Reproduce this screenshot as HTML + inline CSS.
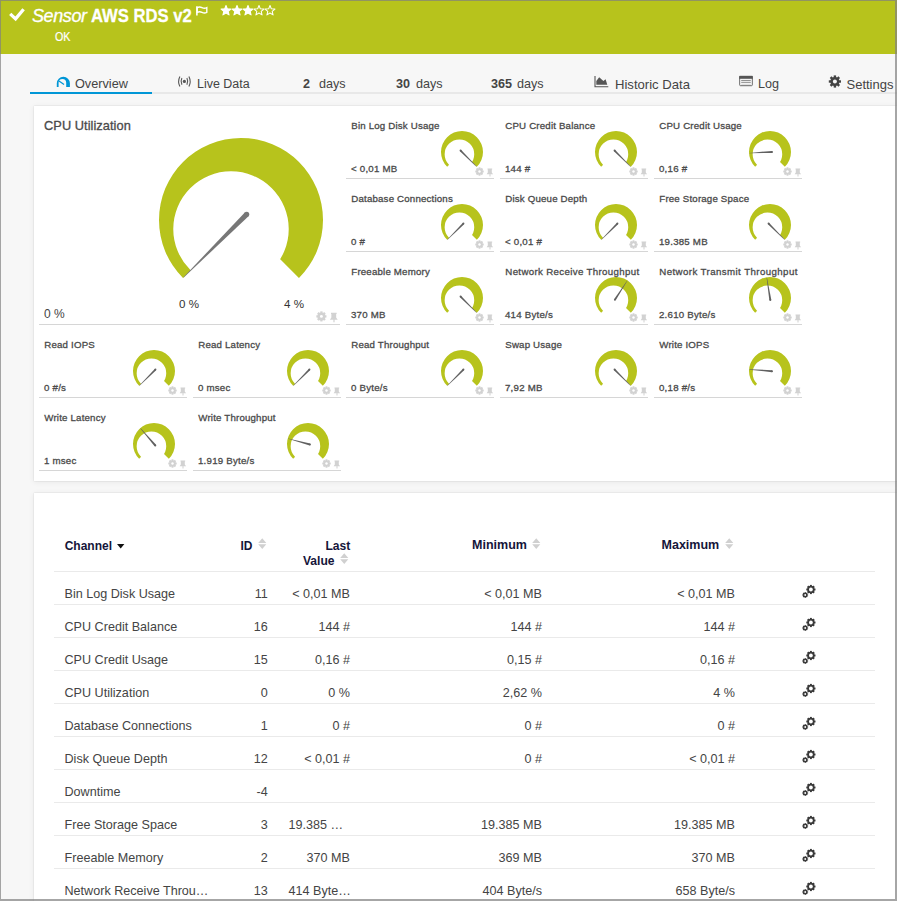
<!DOCTYPE html>
<html><head><meta charset="utf-8"><style>
html,body{margin:0;padding:0;}
body{width:897px;height:901px;overflow:hidden;position:relative;background:#f7f7f7;font-family:"Liberation Sans", sans-serif;}
.t{position:absolute;white-space:nowrap;}
.g{position:absolute;overflow:visible;}
.hdr{position:absolute;left:0;top:0;width:897px;height:54px;background:#b7c31c;}
.tabline{position:absolute;left:30px;top:92px;width:867px;height:2px;background:#e8e8e8;}
.tabul{position:absolute;left:30px;top:92px;width:122px;height:2px;background:#0096d6;}
.panel{position:absolute;left:34px;width:900px;background:#fff;box-shadow:0 0 1.5px rgba(0,0,0,0.14), 0 1px 6px rgba(0,0,0,0.07);}
.ul{position:absolute;height:1px;background:#d6d6d6;}
.tl{position:absolute;left:54px;width:821px;height:1px;background:#eaeaea;}
.frame{position:absolute;left:0;top:0;width:897px;height:901px;box-sizing:border-box;border-left:1px solid rgba(128,128,128,0.7);border-top:1px solid rgba(128,128,128,0.7);border-right:2px solid rgba(128,128,128,0.7);border-bottom:2px solid rgba(128,128,128,0.7);}
</style></head><body>
<div class="hdr"></div>
<svg class="g" style="left:0px;top:0px" width="30" height="30" viewBox="0 0 30 30"><path d="M10.2,13.9 L15.6,18.9 L23.6,9.3" stroke="#fff" stroke-width="3.3" fill="none"/></svg>
<div class="t" style="left:32px;top:6.76px;font-size:18px;line-height:18px;color:#fff;font-weight:normal;font-style:italic;letter-spacing:-0.4px;-webkit-text-stroke:0.3px #fff;">Sensor</div>
<div class="t" style="left:91px;top:6.79px;font-size:18.8px;line-height:18.8px;color:#fff;font-weight:bold;font-style:normal;transform:scaleX(0.885);transform-origin:0 0;-webkit-text-stroke:0.3px #fff;">AWS RDS v2</div>
<svg class="g" style="left:190px;top:0px" width="20" height="20" viewBox="0 0 20 20"><path d="M6.9,6.2 V15.6" stroke="#fff" stroke-width="1.6" fill="none"/><path d="M7.2,7.6 q2.4,-1.2 4.8,0 t4.8,0 v4.8 q-2.4,1.2 -4.8,0 t-4.8,0 z" stroke="#fff" stroke-width="1.4" fill="none"/></svg>
<svg class="g" style="left:0;top:0" width="300" height="30"><polygon points="226.00,5.50 227.35,8.84 230.95,9.09 228.19,11.41 229.06,14.91 226.00,13.00 222.94,14.91 223.81,11.41 221.05,9.09 224.65,8.84" fill="#fff" stroke="#fff" stroke-width="1.05" stroke-linejoin="round"/><polygon points="237.00,5.50 238.35,8.84 241.95,9.09 239.19,11.41 240.06,14.91 237.00,13.00 233.94,14.91 234.81,11.41 232.05,9.09 235.65,8.84" fill="#fff" stroke="#fff" stroke-width="1.05" stroke-linejoin="round"/><polygon points="248.00,5.50 249.35,8.84 252.95,9.09 250.19,11.41 251.06,14.91 248.00,13.00 244.94,14.91 245.81,11.41 243.05,9.09 246.65,8.84" fill="#fff" stroke="#fff" stroke-width="1.05" stroke-linejoin="round"/><polygon points="259.00,5.50 260.35,8.84 263.95,9.09 261.19,11.41 262.06,14.91 259.00,13.00 255.94,14.91 256.81,11.41 254.05,9.09 257.65,8.84" fill="none" stroke="#fff" stroke-width="1.05" stroke-linejoin="round"/><polygon points="270.00,5.50 271.35,8.84 274.95,9.09 272.19,11.41 273.06,14.91 270.00,13.00 266.94,14.91 267.81,11.41 265.05,9.09 268.65,8.84" fill="none" stroke="#fff" stroke-width="1.05" stroke-linejoin="round"/></svg>
<div class="t" style="left:55px;top:30.67px;font-size:12.2px;line-height:12.2px;color:#fff;font-weight:normal;font-style:normal;-webkit-text-stroke:0.2px #fff;transform:scaleX(0.88);transform-origin:0 0;">OK</div>
<div class="tabline"></div><div class="tabul"></div>
<svg class="g" style="left:50px;top:70px" width="25" height="20" viewBox="0 0 25 20"><path fill="#0096d6" fill-rule="evenodd" d="M6.8,16.9 V13.35 A6.55,6.55 0 0 1 19.9,13.35 V16.9 Z M8.6,16.9 V12.8 A3.8,3.8 0 0 1 16.2,12.8 V16.9 Z"/><path d="M9,11 L14,14.6" stroke="#0096d6" stroke-width="1.2"/></svg>
<div class="t" style="left:75px;top:77.85px;font-size:12.7px;line-height:12.7px;color:#444;font-weight:normal;font-style:normal;">Overview</div>
<svg class="g" style="left:174px;top:72px" width="22" height="20" viewBox="0 0 22 20"><circle cx="10.4" cy="9.4" r="1.6" fill="#555"/><path d="M7.9,6.1 A7.2,7.2 0 0 0 7.9,12.7 M12.9,6.1 A7.2,7.2 0 0 1 12.9,12.7 M5.9,4.4 A11.2,11.2 0 0 0 5.9,14.5 M14.9,4.4 A11.2,11.2 0 0 1 14.9,14.5" stroke="#555" stroke-width="1.1" fill="none"/></svg>
<div class="t" style="left:197px;top:78.06px;font-size:12.45px;line-height:12.45px;color:#444;font-weight:normal;font-style:normal;">Live Data</div>
<div class="t" style="left:303px;top:77.93px;font-size:12.6px;line-height:12.6px;color:#444;font-weight:bold;font-style:normal;">2</div>
<div class="t" style="left:319px;top:77.93px;font-size:12.6px;line-height:12.6px;color:#444;font-weight:normal;font-style:normal;">days</div>
<div class="t" style="left:396px;top:77.93px;font-size:12.6px;line-height:12.6px;color:#444;font-weight:bold;font-style:normal;">30</div>
<div class="t" style="left:416px;top:77.93px;font-size:12.6px;line-height:12.6px;color:#444;font-weight:normal;font-style:normal;">days</div>
<div class="t" style="left:491px;top:77.93px;font-size:12.6px;line-height:12.6px;color:#444;font-weight:bold;font-style:normal;">365</div>
<div class="t" style="left:517px;top:77.93px;font-size:12.6px;line-height:12.6px;color:#444;font-weight:normal;font-style:normal;">days</div>
<svg class="g" style="left:590px;top:72px" width="25" height="20" viewBox="0 0 25 20"><path d="M5,3.9 V14.8 H18.3" stroke="#555" stroke-width="1.1" fill="none"/><path d="M6.3,12.8 V8.9 L9.2,5.3 L13.4,8.9 L15.6,7.2 L17.3,12.8 Z" fill="#555"/></svg>
<div class="t" style="left:615px;top:77.51px;font-size:13.1px;line-height:13.1px;color:#444;font-weight:normal;font-style:normal;">Historic Data</div>
<svg class="g" style="left:735px;top:72px" width="25" height="20" viewBox="0 0 25 20"><rect x="4.7" y="4.4" width="12.6" height="9.3" rx="0.8" fill="#fff" stroke="#666" stroke-width="1"/><rect x="4.2" y="3.9" width="13.6" height="2.9" fill="#555"/><path d="M6.2,8.4 h9.6 M6.2,10.3 h9.6" stroke="#777" stroke-width="0.9"/><path d="M6.2,12.2 h9.6" stroke="#ccc" stroke-width="0.9"/></svg>
<div class="t" style="left:758px;top:77.93px;font-size:12.6px;line-height:12.6px;color:#444;font-weight:normal;font-style:normal;">Log</div>
<svg class="g" style="left:825px;top:72px" width="20" height="20" viewBox="0 0 20 20"><g fill="#444"><circle cx="9.9" cy="9.5" r="4.6"/><rect x="8.7" y="3.4" width="2.4" height="12.2" transform="rotate(0 9.9 9.5)"/><rect x="8.7" y="3.4" width="2.4" height="12.2" transform="rotate(45 9.9 9.5)"/><rect x="8.7" y="3.4" width="2.4" height="12.2" transform="rotate(90 9.9 9.5)"/><rect x="8.7" y="3.4" width="2.4" height="12.2" transform="rotate(135 9.9 9.5)"/></g><circle cx="9.9" cy="9.5" r="2" fill="#f7f7f7"/></svg>
<div class="t" style="left:846.5px;top:77.60px;font-size:13px;line-height:13px;color:#444;font-weight:normal;font-style:normal;">Settings</div>
<div class="panel" style="top:106px;height:375px"></div>
<div class="t" style="left:44px;top:120.26px;font-size:12.8px;line-height:12.8px;color:#4a4a4a;font-weight:normal;font-style:normal;-webkit-text-stroke:0.3px #4a4a4a;letter-spacing:0.05px;">CPU Utilization</div>
<svg class="g" style="left:149px;top:128px" width="184" height="184" viewBox="0 0 184 184"><clipPath id="c1"><path d="M92,92 L16.62,167.38 A106.60000000000001,106.60000000000001 0 1 1 167.38,167.38 Z"/></clipPath><path d="M10,92 a82,82 0 1 0 164,0 a82,82 0 1 0 -164,0 Z M24.27,101.02 a57.73,57.73 0 1 0 115.46,0 a57.73,57.73 0 1 0 -115.46,0 Z" fill="#b7c31c" fill-rule="evenodd" clip-path="url(#c1)"/><path d="M95.82,84.50 L34.42,149.23 L34.77,149.58 L99.50,88.18 Z" fill="#777"/><circle cx="97.66" cy="86.34" r="2.6" fill="#777"/></svg>
<div class="t" style="left:179px;top:298.38px;font-size:11.6px;line-height:11.6px;color:#333;font-weight:normal;font-style:normal;">0 %</div>
<div class="t" style="left:284px;top:298.38px;font-size:11.6px;line-height:11.6px;color:#333;font-weight:normal;font-style:normal;">4 %</div>
<div class="t" style="left:44px;top:307.84px;font-size:12px;line-height:12px;color:#444;font-weight:normal;font-style:normal;">0 %</div>
<div class="ul" style="left:39px;top:324px;width:301px"></div>
<svg class="g" style="left:315.80px;top:310.70px" width="24.00" height="14.40" viewBox="0 0 20 12"><g fill="#d2d2d2"><g transform="translate(0,0)"><circle cx="4.5" cy="4.5" r="3.3"/><rect x="3.55" y="0.3" width="1.9" height="8.4" transform="rotate(0 4.5 4.5)"/><rect x="3.55" y="0.3" width="1.9" height="8.4" transform="rotate(45 4.5 4.5)"/><rect x="3.55" y="0.3" width="1.9" height="8.4" transform="rotate(90 4.5 4.5)"/><rect x="3.55" y="0.3" width="1.9" height="8.4" transform="rotate(135 4.5 4.5)"/></g></g><circle cx="4.5" cy="4.5" r="1.2" fill="#fff"/><path d="M12.5,1.4 H17.2 V2.4 H16.8 V5.4 L18.1,7.2 H11.6 L12.8,5.4 V2.4 H12.5 Z M14.5,7 h1 v2.4 h-1 z" fill="#d2d2d2"/></svg>
<svg class="g" style="left:431px;top:121px" width="62" height="62" viewBox="0 0 62 62"><clipPath id="c2"><path d="M31,31 L11.70,50.30 A27.3,27.3 0 1 1 50.30,50.30 Z"/></clipPath><path d="M10,31 a21,21 0 1 0 42,0 a21,21 0 1 0 -42,0 Z M13.65,33.31 a14.78,14.78 0 1 0 29.57,0 a14.78,14.78 0 1 0 -29.57,0 Z" fill="#b7c31c" fill-rule="evenodd" clip-path="url(#c2)"/><path d="M28.88,30.29 L45.41,45.69 L45.69,45.41 L30.29,28.88 Z" fill="#606060"/><circle cx="29.59" cy="29.59" r="1.0" fill="#606060"/></svg>
<div class="t" style="left:351.3px;top:120.99px;font-size:9.7px;line-height:9.7px;color:#4a4a4a;font-weight:normal;font-style:normal;-webkit-text-stroke:0.3px #4a4a4a;letter-spacing:0.18px;">Bin Log Disk Usage</div>
<div class="t" style="left:351.0px;top:163.59px;font-size:9.7px;line-height:9.7px;color:#4a4a4a;font-weight:normal;font-style:normal;-webkit-text-stroke:0.3px #4a4a4a;letter-spacing:0.22px;">&lt; 0,01 MB</div>
<div class="ul" style="left:346px;top:178px;width:148px"></div>
<svg class="g" style="left:474.50px;top:166.50px" width="20.00" height="12.00" viewBox="0 0 20 12"><g fill="#d2d2d2"><g transform="translate(0,0)"><circle cx="4.5" cy="4.5" r="3.3"/><rect x="3.55" y="0.3" width="1.9" height="8.4" transform="rotate(0 4.5 4.5)"/><rect x="3.55" y="0.3" width="1.9" height="8.4" transform="rotate(45 4.5 4.5)"/><rect x="3.55" y="0.3" width="1.9" height="8.4" transform="rotate(90 4.5 4.5)"/><rect x="3.55" y="0.3" width="1.9" height="8.4" transform="rotate(135 4.5 4.5)"/></g></g><circle cx="4.5" cy="4.5" r="1.2" fill="#fff"/><path d="M12.5,1.4 H17.2 V2.4 H16.8 V5.4 L18.1,7.2 H11.6 L12.8,5.4 V2.4 H12.5 Z M14.5,7 h1 v2.4 h-1 z" fill="#d2d2d2"/></svg>
<svg class="g" style="left:585px;top:121px" width="62" height="62" viewBox="0 0 62 62"><clipPath id="c3"><path d="M31,31 L11.70,50.30 A27.3,27.3 0 1 1 50.30,50.30 Z"/></clipPath><path d="M10,31 a21,21 0 1 0 42,0 a21,21 0 1 0 -42,0 Z M13.65,33.31 a14.78,14.78 0 1 0 29.57,0 a14.78,14.78 0 1 0 -29.57,0 Z" fill="#b7c31c" fill-rule="evenodd" clip-path="url(#c3)"/><path d="M28.88,30.29 L45.41,45.69 L45.69,45.41 L30.29,28.88 Z" fill="#606060"/><circle cx="29.59" cy="29.59" r="1.0" fill="#606060"/></svg>
<div class="t" style="left:505.3px;top:120.99px;font-size:9.7px;line-height:9.7px;color:#4a4a4a;font-weight:normal;font-style:normal;-webkit-text-stroke:0.3px #4a4a4a;letter-spacing:0.18px;">CPU Credit Balance</div>
<div class="t" style="left:505.0px;top:163.59px;font-size:9.7px;line-height:9.7px;color:#4a4a4a;font-weight:normal;font-style:normal;-webkit-text-stroke:0.3px #4a4a4a;letter-spacing:0.22px;">144 #</div>
<div class="ul" style="left:500px;top:178px;width:148px"></div>
<svg class="g" style="left:628.50px;top:166.50px" width="20.00" height="12.00" viewBox="0 0 20 12"><g fill="#d2d2d2"><g transform="translate(0,0)"><circle cx="4.5" cy="4.5" r="3.3"/><rect x="3.55" y="0.3" width="1.9" height="8.4" transform="rotate(0 4.5 4.5)"/><rect x="3.55" y="0.3" width="1.9" height="8.4" transform="rotate(45 4.5 4.5)"/><rect x="3.55" y="0.3" width="1.9" height="8.4" transform="rotate(90 4.5 4.5)"/><rect x="3.55" y="0.3" width="1.9" height="8.4" transform="rotate(135 4.5 4.5)"/></g></g><circle cx="4.5" cy="4.5" r="1.2" fill="#fff"/><path d="M12.5,1.4 H17.2 V2.4 H16.8 V5.4 L18.1,7.2 H11.6 L12.8,5.4 V2.4 H12.5 Z M14.5,7 h1 v2.4 h-1 z" fill="#d2d2d2"/></svg>
<svg class="g" style="left:739px;top:121px" width="62" height="62" viewBox="0 0 62 62"><clipPath id="c4"><path d="M31,31 L11.70,50.30 A27.3,27.3 0 1 1 50.30,50.30 Z"/></clipPath><path d="M10,31 a21,21 0 1 0 42,0 a21,21 0 1 0 -42,0 Z M13.65,33.31 a14.78,14.78 0 1 0 29.57,0 a14.78,14.78 0 1 0 -29.57,0 Z" fill="#b7c31c" fill-rule="evenodd" clip-path="url(#c4)"/><path d="M32.94,29.90 L10.44,31.88 L10.46,32.28 L33.05,31.89 Z" fill="#606060"/><circle cx="33.00" cy="30.90" r="1.0" fill="#606060"/></svg>
<div class="t" style="left:659.3px;top:120.99px;font-size:9.7px;line-height:9.7px;color:#4a4a4a;font-weight:normal;font-style:normal;-webkit-text-stroke:0.3px #4a4a4a;letter-spacing:0.18px;">CPU Credit Usage</div>
<div class="t" style="left:659.0px;top:163.59px;font-size:9.7px;line-height:9.7px;color:#4a4a4a;font-weight:normal;font-style:normal;-webkit-text-stroke:0.3px #4a4a4a;letter-spacing:0.22px;">0,16 #</div>
<div class="ul" style="left:654px;top:178px;width:148px"></div>
<svg class="g" style="left:782.50px;top:166.50px" width="20.00" height="12.00" viewBox="0 0 20 12"><g fill="#d2d2d2"><g transform="translate(0,0)"><circle cx="4.5" cy="4.5" r="3.3"/><rect x="3.55" y="0.3" width="1.9" height="8.4" transform="rotate(0 4.5 4.5)"/><rect x="3.55" y="0.3" width="1.9" height="8.4" transform="rotate(45 4.5 4.5)"/><rect x="3.55" y="0.3" width="1.9" height="8.4" transform="rotate(90 4.5 4.5)"/><rect x="3.55" y="0.3" width="1.9" height="8.4" transform="rotate(135 4.5 4.5)"/></g></g><circle cx="4.5" cy="4.5" r="1.2" fill="#fff"/><path d="M12.5,1.4 H17.2 V2.4 H16.8 V5.4 L18.1,7.2 H11.6 L12.8,5.4 V2.4 H12.5 Z M14.5,7 h1 v2.4 h-1 z" fill="#d2d2d2"/></svg>
<svg class="g" style="left:431px;top:194px" width="62" height="62" viewBox="0 0 62 62"><clipPath id="c5"><path d="M31,31 L11.70,50.30 A27.3,27.3 0 1 1 50.30,50.30 Z"/></clipPath><path d="M10,31 a21,21 0 1 0 42,0 a21,21 0 1 0 -42,0 Z M13.65,33.31 a14.78,14.78 0 1 0 29.57,0 a14.78,14.78 0 1 0 -29.57,0 Z" fill="#b7c31c" fill-rule="evenodd" clip-path="url(#c5)"/><path d="M31.71,28.88 L16.31,45.41 L16.59,45.69 L33.12,30.29 Z" fill="#606060"/><circle cx="32.41" cy="29.59" r="1.0" fill="#606060"/></svg>
<div class="t" style="left:351.3px;top:193.99px;font-size:9.7px;line-height:9.7px;color:#4a4a4a;font-weight:normal;font-style:normal;-webkit-text-stroke:0.3px #4a4a4a;letter-spacing:0.18px;">Database Connections</div>
<div class="t" style="left:351.0px;top:236.59px;font-size:9.7px;line-height:9.7px;color:#4a4a4a;font-weight:normal;font-style:normal;-webkit-text-stroke:0.3px #4a4a4a;letter-spacing:0.22px;">0 #</div>
<div class="ul" style="left:346px;top:251px;width:148px"></div>
<svg class="g" style="left:474.50px;top:239.50px" width="20.00" height="12.00" viewBox="0 0 20 12"><g fill="#d2d2d2"><g transform="translate(0,0)"><circle cx="4.5" cy="4.5" r="3.3"/><rect x="3.55" y="0.3" width="1.9" height="8.4" transform="rotate(0 4.5 4.5)"/><rect x="3.55" y="0.3" width="1.9" height="8.4" transform="rotate(45 4.5 4.5)"/><rect x="3.55" y="0.3" width="1.9" height="8.4" transform="rotate(90 4.5 4.5)"/><rect x="3.55" y="0.3" width="1.9" height="8.4" transform="rotate(135 4.5 4.5)"/></g></g><circle cx="4.5" cy="4.5" r="1.2" fill="#fff"/><path d="M12.5,1.4 H17.2 V2.4 H16.8 V5.4 L18.1,7.2 H11.6 L12.8,5.4 V2.4 H12.5 Z M14.5,7 h1 v2.4 h-1 z" fill="#d2d2d2"/></svg>
<svg class="g" style="left:585px;top:194px" width="62" height="62" viewBox="0 0 62 62"><clipPath id="c6"><path d="M31,31 L11.70,50.30 A27.3,27.3 0 1 1 50.30,50.30 Z"/></clipPath><path d="M10,31 a21,21 0 1 0 42,0 a21,21 0 1 0 -42,0 Z M13.65,33.31 a14.78,14.78 0 1 0 29.57,0 a14.78,14.78 0 1 0 -29.57,0 Z" fill="#b7c31c" fill-rule="evenodd" clip-path="url(#c6)"/><path d="M31.71,28.88 L16.31,45.41 L16.59,45.69 L33.12,30.29 Z" fill="#606060"/><circle cx="32.41" cy="29.59" r="1.0" fill="#606060"/></svg>
<div class="t" style="left:505.3px;top:193.99px;font-size:9.7px;line-height:9.7px;color:#4a4a4a;font-weight:normal;font-style:normal;-webkit-text-stroke:0.3px #4a4a4a;letter-spacing:0.18px;">Disk Queue Depth</div>
<div class="t" style="left:505.0px;top:236.59px;font-size:9.7px;line-height:9.7px;color:#4a4a4a;font-weight:normal;font-style:normal;-webkit-text-stroke:0.3px #4a4a4a;letter-spacing:0.22px;">&lt; 0,01 #</div>
<div class="ul" style="left:500px;top:251px;width:148px"></div>
<svg class="g" style="left:628.50px;top:239.50px" width="20.00" height="12.00" viewBox="0 0 20 12"><g fill="#d2d2d2"><g transform="translate(0,0)"><circle cx="4.5" cy="4.5" r="3.3"/><rect x="3.55" y="0.3" width="1.9" height="8.4" transform="rotate(0 4.5 4.5)"/><rect x="3.55" y="0.3" width="1.9" height="8.4" transform="rotate(45 4.5 4.5)"/><rect x="3.55" y="0.3" width="1.9" height="8.4" transform="rotate(90 4.5 4.5)"/><rect x="3.55" y="0.3" width="1.9" height="8.4" transform="rotate(135 4.5 4.5)"/></g></g><circle cx="4.5" cy="4.5" r="1.2" fill="#fff"/><path d="M12.5,1.4 H17.2 V2.4 H16.8 V5.4 L18.1,7.2 H11.6 L12.8,5.4 V2.4 H12.5 Z M14.5,7 h1 v2.4 h-1 z" fill="#d2d2d2"/></svg>
<svg class="g" style="left:739px;top:194px" width="62" height="62" viewBox="0 0 62 62"><clipPath id="c7"><path d="M31,31 L11.70,50.30 A27.3,27.3 0 1 1 50.30,50.30 Z"/></clipPath><path d="M10,31 a21,21 0 1 0 42,0 a21,21 0 1 0 -42,0 Z M13.65,33.31 a14.78,14.78 0 1 0 29.57,0 a14.78,14.78 0 1 0 -29.57,0 Z" fill="#b7c31c" fill-rule="evenodd" clip-path="url(#c7)"/><path d="M28.88,30.29 L45.41,45.69 L45.69,45.41 L30.29,28.88 Z" fill="#606060"/><circle cx="29.59" cy="29.59" r="1.0" fill="#606060"/></svg>
<div class="t" style="left:659.3px;top:193.99px;font-size:9.7px;line-height:9.7px;color:#4a4a4a;font-weight:normal;font-style:normal;-webkit-text-stroke:0.3px #4a4a4a;letter-spacing:0.18px;">Free Storage Space</div>
<div class="t" style="left:659.0px;top:236.59px;font-size:9.7px;line-height:9.7px;color:#4a4a4a;font-weight:normal;font-style:normal;-webkit-text-stroke:0.3px #4a4a4a;letter-spacing:0.22px;">19.385 MB</div>
<div class="ul" style="left:654px;top:251px;width:148px"></div>
<svg class="g" style="left:782.50px;top:239.50px" width="20.00" height="12.00" viewBox="0 0 20 12"><g fill="#d2d2d2"><g transform="translate(0,0)"><circle cx="4.5" cy="4.5" r="3.3"/><rect x="3.55" y="0.3" width="1.9" height="8.4" transform="rotate(0 4.5 4.5)"/><rect x="3.55" y="0.3" width="1.9" height="8.4" transform="rotate(45 4.5 4.5)"/><rect x="3.55" y="0.3" width="1.9" height="8.4" transform="rotate(90 4.5 4.5)"/><rect x="3.55" y="0.3" width="1.9" height="8.4" transform="rotate(135 4.5 4.5)"/></g></g><circle cx="4.5" cy="4.5" r="1.2" fill="#fff"/><path d="M12.5,1.4 H17.2 V2.4 H16.8 V5.4 L18.1,7.2 H11.6 L12.8,5.4 V2.4 H12.5 Z M14.5,7 h1 v2.4 h-1 z" fill="#d2d2d2"/></svg>
<svg class="g" style="left:431px;top:267px" width="62" height="62" viewBox="0 0 62 62"><clipPath id="c8"><path d="M31,31 L11.70,50.30 A27.3,27.3 0 1 1 50.30,50.30 Z"/></clipPath><path d="M10,31 a21,21 0 1 0 42,0 a21,21 0 1 0 -42,0 Z M13.65,33.31 a14.78,14.78 0 1 0 29.57,0 a14.78,14.78 0 1 0 -29.57,0 Z" fill="#b7c31c" fill-rule="evenodd" clip-path="url(#c8)"/><path d="M28.88,30.29 L45.41,45.69 L45.69,45.41 L30.29,28.88 Z" fill="#606060"/><circle cx="29.59" cy="29.59" r="1.0" fill="#606060"/></svg>
<div class="t" style="left:351.3px;top:266.99px;font-size:9.7px;line-height:9.7px;color:#4a4a4a;font-weight:normal;font-style:normal;-webkit-text-stroke:0.3px #4a4a4a;letter-spacing:0.18px;">Freeable Memory</div>
<div class="t" style="left:351.0px;top:309.59px;font-size:9.7px;line-height:9.7px;color:#4a4a4a;font-weight:normal;font-style:normal;-webkit-text-stroke:0.3px #4a4a4a;letter-spacing:0.22px;">370 MB</div>
<div class="ul" style="left:346px;top:324px;width:148px"></div>
<svg class="g" style="left:474.50px;top:312.50px" width="20.00" height="12.00" viewBox="0 0 20 12"><g fill="#d2d2d2"><g transform="translate(0,0)"><circle cx="4.5" cy="4.5" r="3.3"/><rect x="3.55" y="0.3" width="1.9" height="8.4" transform="rotate(0 4.5 4.5)"/><rect x="3.55" y="0.3" width="1.9" height="8.4" transform="rotate(45 4.5 4.5)"/><rect x="3.55" y="0.3" width="1.9" height="8.4" transform="rotate(90 4.5 4.5)"/><rect x="3.55" y="0.3" width="1.9" height="8.4" transform="rotate(135 4.5 4.5)"/></g></g><circle cx="4.5" cy="4.5" r="1.2" fill="#fff"/><path d="M12.5,1.4 H17.2 V2.4 H16.8 V5.4 L18.1,7.2 H11.6 L12.8,5.4 V2.4 H12.5 Z M14.5,7 h1 v2.4 h-1 z" fill="#d2d2d2"/></svg>
<svg class="g" style="left:585px;top:267px" width="62" height="62" viewBox="0 0 62 62"><clipPath id="c9"><path d="M31,31 L11.70,50.30 A27.3,27.3 0 1 1 50.30,50.30 Z"/></clipPath><path d="M10,31 a21,21 0 1 0 42,0 a21,21 0 1 0 -42,0 Z M13.65,33.31 a14.78,14.78 0 1 0 29.57,0 a14.78,14.78 0 1 0 -29.57,0 Z" fill="#b7c31c" fill-rule="evenodd" clip-path="url(#c9)"/><path d="M30.75,33.22 L42.38,13.85 L42.04,13.63 L29.07,32.13 Z" fill="#606060"/><circle cx="29.91" cy="32.68" r="1.0" fill="#606060"/></svg>
<div class="t" style="left:505.3px;top:266.99px;font-size:9.7px;line-height:9.7px;color:#4a4a4a;font-weight:normal;font-style:normal;-webkit-text-stroke:0.3px #4a4a4a;letter-spacing:0.34px;">Network Receive Throughput</div>
<div class="t" style="left:505.0px;top:309.59px;font-size:9.7px;line-height:9.7px;color:#4a4a4a;font-weight:normal;font-style:normal;-webkit-text-stroke:0.3px #4a4a4a;letter-spacing:0.22px;">414 Byte/s</div>
<div class="ul" style="left:500px;top:324px;width:148px"></div>
<svg class="g" style="left:628.50px;top:312.50px" width="20.00" height="12.00" viewBox="0 0 20 12"><g fill="#d2d2d2"><g transform="translate(0,0)"><circle cx="4.5" cy="4.5" r="3.3"/><rect x="3.55" y="0.3" width="1.9" height="8.4" transform="rotate(0 4.5 4.5)"/><rect x="3.55" y="0.3" width="1.9" height="8.4" transform="rotate(45 4.5 4.5)"/><rect x="3.55" y="0.3" width="1.9" height="8.4" transform="rotate(90 4.5 4.5)"/><rect x="3.55" y="0.3" width="1.9" height="8.4" transform="rotate(135 4.5 4.5)"/></g></g><circle cx="4.5" cy="4.5" r="1.2" fill="#fff"/><path d="M12.5,1.4 H17.2 V2.4 H16.8 V5.4 L18.1,7.2 H11.6 L12.8,5.4 V2.4 H12.5 Z M14.5,7 h1 v2.4 h-1 z" fill="#d2d2d2"/></svg>
<svg class="g" style="left:739px;top:267px" width="62" height="62" viewBox="0 0 62 62"><clipPath id="c10"><path d="M31,31 L11.70,50.30 A27.3,27.3 0 1 1 50.30,50.30 Z"/></clipPath><path d="M10,31 a21,21 0 1 0 42,0 a21,21 0 1 0 -42,0 Z M13.65,33.31 a14.78,14.78 0 1 0 29.57,0 a14.78,14.78 0 1 0 -29.57,0 Z" fill="#b7c31c" fill-rule="evenodd" clip-path="url(#c10)"/><path d="M32.30,32.82 L27.98,10.64 L27.58,10.70 L30.33,33.13 Z" fill="#606060"/><circle cx="31.31" cy="32.98" r="1.0" fill="#606060"/></svg>
<div class="t" style="left:659.3px;top:266.99px;font-size:9.7px;line-height:9.7px;color:#4a4a4a;font-weight:normal;font-style:normal;-webkit-text-stroke:0.3px #4a4a4a;letter-spacing:0.41px;">Network Transmit Throughput</div>
<div class="t" style="left:659.0px;top:309.59px;font-size:9.7px;line-height:9.7px;color:#4a4a4a;font-weight:normal;font-style:normal;-webkit-text-stroke:0.3px #4a4a4a;letter-spacing:0.22px;">2.610 Byte/s</div>
<div class="ul" style="left:654px;top:324px;width:148px"></div>
<svg class="g" style="left:782.50px;top:312.50px" width="20.00" height="12.00" viewBox="0 0 20 12"><g fill="#d2d2d2"><g transform="translate(0,0)"><circle cx="4.5" cy="4.5" r="3.3"/><rect x="3.55" y="0.3" width="1.9" height="8.4" transform="rotate(0 4.5 4.5)"/><rect x="3.55" y="0.3" width="1.9" height="8.4" transform="rotate(45 4.5 4.5)"/><rect x="3.55" y="0.3" width="1.9" height="8.4" transform="rotate(90 4.5 4.5)"/><rect x="3.55" y="0.3" width="1.9" height="8.4" transform="rotate(135 4.5 4.5)"/></g></g><circle cx="4.5" cy="4.5" r="1.2" fill="#fff"/><path d="M12.5,1.4 H17.2 V2.4 H16.8 V5.4 L18.1,7.2 H11.6 L12.8,5.4 V2.4 H12.5 Z M14.5,7 h1 v2.4 h-1 z" fill="#d2d2d2"/></svg>
<svg class="g" style="left:123px;top:340px" width="62" height="62" viewBox="0 0 62 62"><clipPath id="c11"><path d="M31,31 L11.70,50.30 A27.3,27.3 0 1 1 50.30,50.30 Z"/></clipPath><path d="M10,31 a21,21 0 1 0 42,0 a21,21 0 1 0 -42,0 Z M13.65,33.31 a14.78,14.78 0 1 0 29.57,0 a14.78,14.78 0 1 0 -29.57,0 Z" fill="#b7c31c" fill-rule="evenodd" clip-path="url(#c11)"/><path d="M31.71,28.88 L16.31,45.41 L16.59,45.69 L33.12,30.29 Z" fill="#606060"/><circle cx="32.41" cy="29.59" r="1.0" fill="#606060"/></svg>
<div class="t" style="left:44.3px;top:339.99px;font-size:9.7px;line-height:9.7px;color:#4a4a4a;font-weight:normal;font-style:normal;-webkit-text-stroke:0.3px #4a4a4a;letter-spacing:0.18px;">Read IOPS</div>
<div class="t" style="left:44.0px;top:382.59px;font-size:9.7px;line-height:9.7px;color:#4a4a4a;font-weight:normal;font-style:normal;-webkit-text-stroke:0.3px #4a4a4a;letter-spacing:0.22px;">0 #/s</div>
<div class="ul" style="left:39px;top:397px;width:148px"></div>
<svg class="g" style="left:167.50px;top:385.50px" width="20.00" height="12.00" viewBox="0 0 20 12"><g fill="#d2d2d2"><g transform="translate(0,0)"><circle cx="4.5" cy="4.5" r="3.3"/><rect x="3.55" y="0.3" width="1.9" height="8.4" transform="rotate(0 4.5 4.5)"/><rect x="3.55" y="0.3" width="1.9" height="8.4" transform="rotate(45 4.5 4.5)"/><rect x="3.55" y="0.3" width="1.9" height="8.4" transform="rotate(90 4.5 4.5)"/><rect x="3.55" y="0.3" width="1.9" height="8.4" transform="rotate(135 4.5 4.5)"/></g></g><circle cx="4.5" cy="4.5" r="1.2" fill="#fff"/><path d="M12.5,1.4 H17.2 V2.4 H16.8 V5.4 L18.1,7.2 H11.6 L12.8,5.4 V2.4 H12.5 Z M14.5,7 h1 v2.4 h-1 z" fill="#d2d2d2"/></svg>
<svg class="g" style="left:277px;top:340px" width="62" height="62" viewBox="0 0 62 62"><clipPath id="c12"><path d="M31,31 L11.70,50.30 A27.3,27.3 0 1 1 50.30,50.30 Z"/></clipPath><path d="M10,31 a21,21 0 1 0 42,0 a21,21 0 1 0 -42,0 Z M13.65,33.31 a14.78,14.78 0 1 0 29.57,0 a14.78,14.78 0 1 0 -29.57,0 Z" fill="#b7c31c" fill-rule="evenodd" clip-path="url(#c12)"/><path d="M31.71,28.88 L16.31,45.41 L16.59,45.69 L33.12,30.29 Z" fill="#606060"/><circle cx="32.41" cy="29.59" r="1.0" fill="#606060"/></svg>
<div class="t" style="left:198.3px;top:339.99px;font-size:9.7px;line-height:9.7px;color:#4a4a4a;font-weight:normal;font-style:normal;-webkit-text-stroke:0.3px #4a4a4a;letter-spacing:0.18px;">Read Latency</div>
<div class="t" style="left:198.0px;top:382.59px;font-size:9.7px;line-height:9.7px;color:#4a4a4a;font-weight:normal;font-style:normal;-webkit-text-stroke:0.3px #4a4a4a;letter-spacing:0.22px;">0 msec</div>
<div class="ul" style="left:193px;top:397px;width:148px"></div>
<svg class="g" style="left:321.50px;top:385.50px" width="20.00" height="12.00" viewBox="0 0 20 12"><g fill="#d2d2d2"><g transform="translate(0,0)"><circle cx="4.5" cy="4.5" r="3.3"/><rect x="3.55" y="0.3" width="1.9" height="8.4" transform="rotate(0 4.5 4.5)"/><rect x="3.55" y="0.3" width="1.9" height="8.4" transform="rotate(45 4.5 4.5)"/><rect x="3.55" y="0.3" width="1.9" height="8.4" transform="rotate(90 4.5 4.5)"/><rect x="3.55" y="0.3" width="1.9" height="8.4" transform="rotate(135 4.5 4.5)"/></g></g><circle cx="4.5" cy="4.5" r="1.2" fill="#fff"/><path d="M12.5,1.4 H17.2 V2.4 H16.8 V5.4 L18.1,7.2 H11.6 L12.8,5.4 V2.4 H12.5 Z M14.5,7 h1 v2.4 h-1 z" fill="#d2d2d2"/></svg>
<svg class="g" style="left:431px;top:340px" width="62" height="62" viewBox="0 0 62 62"><clipPath id="c13"><path d="M31,31 L11.70,50.30 A27.3,27.3 0 1 1 50.30,50.30 Z"/></clipPath><path d="M10,31 a21,21 0 1 0 42,0 a21,21 0 1 0 -42,0 Z M13.65,33.31 a14.78,14.78 0 1 0 29.57,0 a14.78,14.78 0 1 0 -29.57,0 Z" fill="#b7c31c" fill-rule="evenodd" clip-path="url(#c13)"/><path d="M31.71,28.88 L16.31,45.41 L16.59,45.69 L33.12,30.29 Z" fill="#606060"/><circle cx="32.41" cy="29.59" r="1.0" fill="#606060"/></svg>
<div class="t" style="left:351.3px;top:339.99px;font-size:9.7px;line-height:9.7px;color:#4a4a4a;font-weight:normal;font-style:normal;-webkit-text-stroke:0.3px #4a4a4a;letter-spacing:0.18px;">Read Throughput</div>
<div class="t" style="left:351.0px;top:382.59px;font-size:9.7px;line-height:9.7px;color:#4a4a4a;font-weight:normal;font-style:normal;-webkit-text-stroke:0.3px #4a4a4a;letter-spacing:0.22px;">0 Byte/s</div>
<div class="ul" style="left:346px;top:397px;width:148px"></div>
<svg class="g" style="left:474.50px;top:385.50px" width="20.00" height="12.00" viewBox="0 0 20 12"><g fill="#d2d2d2"><g transform="translate(0,0)"><circle cx="4.5" cy="4.5" r="3.3"/><rect x="3.55" y="0.3" width="1.9" height="8.4" transform="rotate(0 4.5 4.5)"/><rect x="3.55" y="0.3" width="1.9" height="8.4" transform="rotate(45 4.5 4.5)"/><rect x="3.55" y="0.3" width="1.9" height="8.4" transform="rotate(90 4.5 4.5)"/><rect x="3.55" y="0.3" width="1.9" height="8.4" transform="rotate(135 4.5 4.5)"/></g></g><circle cx="4.5" cy="4.5" r="1.2" fill="#fff"/><path d="M12.5,1.4 H17.2 V2.4 H16.8 V5.4 L18.1,7.2 H11.6 L12.8,5.4 V2.4 H12.5 Z M14.5,7 h1 v2.4 h-1 z" fill="#d2d2d2"/></svg>
<svg class="g" style="left:585px;top:340px" width="62" height="62" viewBox="0 0 62 62"><clipPath id="c14"><path d="M31,31 L11.70,50.30 A27.3,27.3 0 1 1 50.30,50.30 Z"/></clipPath><path d="M10,31 a21,21 0 1 0 42,0 a21,21 0 1 0 -42,0 Z M13.65,33.31 a14.78,14.78 0 1 0 29.57,0 a14.78,14.78 0 1 0 -29.57,0 Z" fill="#b7c31c" fill-rule="evenodd" clip-path="url(#c14)"/><path d="M28.88,30.29 L45.41,45.69 L45.69,45.41 L30.29,28.88 Z" fill="#606060"/><circle cx="29.59" cy="29.59" r="1.0" fill="#606060"/></svg>
<div class="t" style="left:505.3px;top:339.99px;font-size:9.7px;line-height:9.7px;color:#4a4a4a;font-weight:normal;font-style:normal;-webkit-text-stroke:0.3px #4a4a4a;letter-spacing:0.18px;">Swap Usage</div>
<div class="t" style="left:505.0px;top:382.59px;font-size:9.7px;line-height:9.7px;color:#4a4a4a;font-weight:normal;font-style:normal;-webkit-text-stroke:0.3px #4a4a4a;letter-spacing:0.22px;">7,92 MB</div>
<div class="ul" style="left:500px;top:397px;width:148px"></div>
<svg class="g" style="left:628.50px;top:385.50px" width="20.00" height="12.00" viewBox="0 0 20 12"><g fill="#d2d2d2"><g transform="translate(0,0)"><circle cx="4.5" cy="4.5" r="3.3"/><rect x="3.55" y="0.3" width="1.9" height="8.4" transform="rotate(0 4.5 4.5)"/><rect x="3.55" y="0.3" width="1.9" height="8.4" transform="rotate(45 4.5 4.5)"/><rect x="3.55" y="0.3" width="1.9" height="8.4" transform="rotate(90 4.5 4.5)"/><rect x="3.55" y="0.3" width="1.9" height="8.4" transform="rotate(135 4.5 4.5)"/></g></g><circle cx="4.5" cy="4.5" r="1.2" fill="#fff"/><path d="M12.5,1.4 H17.2 V2.4 H16.8 V5.4 L18.1,7.2 H11.6 L12.8,5.4 V2.4 H12.5 Z M14.5,7 h1 v2.4 h-1 z" fill="#d2d2d2"/></svg>
<svg class="g" style="left:739px;top:340px" width="62" height="62" viewBox="0 0 62 62"><clipPath id="c15"><path d="M31,31 L11.70,50.30 A27.3,27.3 0 1 1 50.30,50.30 Z"/></clipPath><path d="M10,31 a21,21 0 1 0 42,0 a21,21 0 1 0 -42,0 Z M13.65,33.31 a14.78,14.78 0 1 0 29.57,0 a14.78,14.78 0 1 0 -29.57,0 Z" fill="#b7c31c" fill-rule="evenodd" clip-path="url(#c15)"/><path d="M33.06,30.14 L10.48,29.36 L10.46,29.76 L32.93,32.14 Z" fill="#606060"/><circle cx="33.00" cy="31.14" r="1.0" fill="#606060"/></svg>
<div class="t" style="left:659.3px;top:339.99px;font-size:9.7px;line-height:9.7px;color:#4a4a4a;font-weight:normal;font-style:normal;-webkit-text-stroke:0.3px #4a4a4a;letter-spacing:0.18px;">Write IOPS</div>
<div class="t" style="left:659.0px;top:382.59px;font-size:9.7px;line-height:9.7px;color:#4a4a4a;font-weight:normal;font-style:normal;-webkit-text-stroke:0.3px #4a4a4a;letter-spacing:0.22px;">0,18 #/s</div>
<div class="ul" style="left:654px;top:397px;width:148px"></div>
<svg class="g" style="left:782.50px;top:385.50px" width="20.00" height="12.00" viewBox="0 0 20 12"><g fill="#d2d2d2"><g transform="translate(0,0)"><circle cx="4.5" cy="4.5" r="3.3"/><rect x="3.55" y="0.3" width="1.9" height="8.4" transform="rotate(0 4.5 4.5)"/><rect x="3.55" y="0.3" width="1.9" height="8.4" transform="rotate(45 4.5 4.5)"/><rect x="3.55" y="0.3" width="1.9" height="8.4" transform="rotate(90 4.5 4.5)"/><rect x="3.55" y="0.3" width="1.9" height="8.4" transform="rotate(135 4.5 4.5)"/></g></g><circle cx="4.5" cy="4.5" r="1.2" fill="#fff"/><path d="M12.5,1.4 H17.2 V2.4 H16.8 V5.4 L18.1,7.2 H11.6 L12.8,5.4 V2.4 H12.5 Z M14.5,7 h1 v2.4 h-1 z" fill="#d2d2d2"/></svg>
<svg class="g" style="left:123px;top:413px" width="62" height="62" viewBox="0 0 62 62"><clipPath id="c16"><path d="M31,31 L11.70,50.30 A27.3,27.3 0 1 1 50.30,50.30 Z"/></clipPath><path d="M10,31 a21,21 0 1 0 42,0 a21,21 0 1 0 -42,0 Z M13.65,33.31 a14.78,14.78 0 1 0 29.57,0 a14.78,14.78 0 1 0 -29.57,0 Z" fill="#b7c31c" fill-rule="evenodd" clip-path="url(#c16)"/><path d="M33.07,31.85 L17.65,15.34 L17.35,15.60 L31.56,33.17 Z" fill="#606060"/><circle cx="32.31" cy="32.51" r="1.0" fill="#606060"/></svg>
<div class="t" style="left:44.3px;top:412.99px;font-size:9.7px;line-height:9.7px;color:#4a4a4a;font-weight:normal;font-style:normal;-webkit-text-stroke:0.3px #4a4a4a;letter-spacing:0.18px;">Write Latency</div>
<div class="t" style="left:44.0px;top:455.59px;font-size:9.7px;line-height:9.7px;color:#4a4a4a;font-weight:normal;font-style:normal;-webkit-text-stroke:0.3px #4a4a4a;letter-spacing:0.22px;">1 msec</div>
<div class="ul" style="left:39px;top:470px;width:148px"></div>
<svg class="g" style="left:167.50px;top:458.50px" width="20.00" height="12.00" viewBox="0 0 20 12"><g fill="#d2d2d2"><g transform="translate(0,0)"><circle cx="4.5" cy="4.5" r="3.3"/><rect x="3.55" y="0.3" width="1.9" height="8.4" transform="rotate(0 4.5 4.5)"/><rect x="3.55" y="0.3" width="1.9" height="8.4" transform="rotate(45 4.5 4.5)"/><rect x="3.55" y="0.3" width="1.9" height="8.4" transform="rotate(90 4.5 4.5)"/><rect x="3.55" y="0.3" width="1.9" height="8.4" transform="rotate(135 4.5 4.5)"/></g></g><circle cx="4.5" cy="4.5" r="1.2" fill="#fff"/><path d="M12.5,1.4 H17.2 V2.4 H16.8 V5.4 L18.1,7.2 H11.6 L12.8,5.4 V2.4 H12.5 Z M14.5,7 h1 v2.4 h-1 z" fill="#d2d2d2"/></svg>
<svg class="g" style="left:277px;top:413px" width="62" height="62" viewBox="0 0 62 62"><clipPath id="c17"><path d="M31,31 L11.70,50.30 A27.3,27.3 0 1 1 50.30,50.30 Z"/></clipPath><path d="M10,31 a21,21 0 1 0 42,0 a21,21 0 1 0 -42,0 Z M13.65,33.31 a14.78,14.78 0 1 0 29.57,0 a14.78,14.78 0 1 0 -29.57,0 Z" fill="#b7c31c" fill-rule="evenodd" clip-path="url(#c17)"/><path d="M33.19,30.55 L11.17,25.48 L11.07,25.87 L32.67,32.48 Z" fill="#606060"/><circle cx="32.93" cy="31.52" r="1.0" fill="#606060"/></svg>
<div class="t" style="left:198.3px;top:412.99px;font-size:9.7px;line-height:9.7px;color:#4a4a4a;font-weight:normal;font-style:normal;-webkit-text-stroke:0.3px #4a4a4a;letter-spacing:0.18px;">Write Throughput</div>
<div class="t" style="left:198.0px;top:455.59px;font-size:9.7px;line-height:9.7px;color:#4a4a4a;font-weight:normal;font-style:normal;-webkit-text-stroke:0.3px #4a4a4a;letter-spacing:0.22px;">1.919 Byte/s</div>
<div class="ul" style="left:193px;top:470px;width:148px"></div>
<svg class="g" style="left:321.50px;top:458.50px" width="20.00" height="12.00" viewBox="0 0 20 12"><g fill="#d2d2d2"><g transform="translate(0,0)"><circle cx="4.5" cy="4.5" r="3.3"/><rect x="3.55" y="0.3" width="1.9" height="8.4" transform="rotate(0 4.5 4.5)"/><rect x="3.55" y="0.3" width="1.9" height="8.4" transform="rotate(45 4.5 4.5)"/><rect x="3.55" y="0.3" width="1.9" height="8.4" transform="rotate(90 4.5 4.5)"/><rect x="3.55" y="0.3" width="1.9" height="8.4" transform="rotate(135 4.5 4.5)"/></g></g><circle cx="4.5" cy="4.5" r="1.2" fill="#fff"/><path d="M12.5,1.4 H17.2 V2.4 H16.8 V5.4 L18.1,7.2 H11.6 L12.8,5.4 V2.4 H12.5 Z M14.5,7 h1 v2.4 h-1 z" fill="#d2d2d2"/></svg>
<div class="panel" style="top:493px;height:420px"></div>
<div class="t" style="left:64.7px;top:539.64px;font-size:12px;line-height:12px;color:#15153a;font-weight:bold;font-style:normal;">Channel</div>
<svg class="g" style="left:117.4px;top:544.4px" width="7.4" height="4.4" viewBox="0 0 7.4 4.4"><path d="M0,0 L3.7,4.4 L7.4,0 Z" fill="#111"/></svg>
<div class="t" style="left:240.5px;top:539.64px;font-size:12px;line-height:12px;color:#15153a;font-weight:bold;font-style:normal;">ID</div>
<svg class="g" style="left:257.6px;top:538.4px" width="8.5" height="11" viewBox="0 0 8.5 11"><path d="M0.2,4.9 L4.25,0.2 L8.3,4.9 Z M0.2,6.3 L4.25,11 L8.3,6.3 Z" fill="#d0d0d0"/></svg>
<div class="t" style="right:546.7px;top:539.56px;font-size:12.1px;line-height:12.1px;color:#15153a;font-weight:bold;font-style:normal;text-align:right;">Last</div>
<div class="t" style="right:562.5px;top:555.16px;font-size:12.1px;line-height:12.1px;color:#15153a;font-weight:bold;font-style:normal;text-align:right;">Value</div>
<svg class="g" style="left:340px;top:553.4px" width="8.5" height="11" viewBox="0 0 8.5 11"><path d="M0.2,4.9 L4.25,0.2 L8.3,4.9 Z M0.2,6.3 L4.25,11 L8.3,6.3 Z" fill="#d0d0d0"/></svg>
<div class="t" style="right:370.1px;top:539.22px;font-size:12.5px;line-height:12.5px;color:#15153a;font-weight:bold;font-style:normal;text-align:right;">Minimum</div>
<svg class="g" style="left:532.4px;top:538.3px" width="8.5" height="11" viewBox="0 0 8.5 11"><path d="M0.2,4.9 L4.25,0.2 L8.3,4.9 Z M0.2,6.3 L4.25,11 L8.3,6.3 Z" fill="#d0d0d0"/></svg>
<div class="t" style="right:177.79999999999995px;top:539.22px;font-size:12.5px;line-height:12.5px;color:#15153a;font-weight:bold;font-style:normal;text-align:right;">Maximum</div>
<svg class="g" style="left:724.5px;top:538.3px" width="8.5" height="11" viewBox="0 0 8.5 11"><path d="M0.2,4.9 L4.25,0.2 L8.3,4.9 Z M0.2,6.3 L4.25,11 L8.3,6.3 Z" fill="#d0d0d0"/></svg>
<div class="tl" style="top:571px"></div>
<div class="t" style="left:64.5px;top:588.33px;font-size:12.6px;line-height:12.6px;color:#444;font-weight:normal;font-style:normal;">Bin Log Disk Usage</div>
<div class="t" style="right:629.3px;top:588.33px;font-size:12.6px;line-height:12.6px;color:#444;font-weight:normal;font-style:normal;text-align:right;">11</div>
<div class="t" style="right:547px;top:588.33px;font-size:12.6px;line-height:12.6px;color:#444;font-weight:normal;font-style:normal;text-align:right;">&lt; 0,01 MB</div>
<div class="t" style="right:355px;top:588.33px;font-size:12.6px;line-height:12.6px;color:#444;font-weight:normal;font-style:normal;text-align:right;">&lt; 0,01 MB</div>
<div class="t" style="right:162px;top:588.33px;font-size:12.6px;line-height:12.6px;color:#444;font-weight:normal;font-style:normal;text-align:right;">&lt; 0,01 MB</div>
<svg class="g" style="left:800px;top:584px" width="18" height="16" viewBox="0 0 18 16"><g fill="#3a3a3a"><rect x="9.95" y="0.9" width="1.9" height="9.2" transform="rotate(0 10.9 5.5)"/><rect x="9.95" y="0.9" width="1.9" height="9.2" transform="rotate(45 10.9 5.5)"/><rect x="9.95" y="0.9" width="1.9" height="9.2" transform="rotate(90 10.9 5.5)"/><rect x="9.95" y="0.9" width="1.9" height="9.2" transform="rotate(135 10.9 5.5)"/><circle cx="10.9" cy="5.5" r="3.7"/><rect x="4.55" y="8.1" width="1.3" height="5.8" transform="rotate(0 5.2 11)"/><rect x="4.55" y="8.1" width="1.3" height="5.8" transform="rotate(45 5.2 11)"/><rect x="4.55" y="8.1" width="1.3" height="5.8" transform="rotate(90 5.2 11)"/><rect x="4.55" y="8.1" width="1.3" height="5.8" transform="rotate(135 5.2 11)"/><circle cx="5.2" cy="11" r="2.2"/></g><circle cx="10.9" cy="5.5" r="1.9" fill="#fff"/><circle cx="5.2" cy="11" r="0.9" fill="#fff"/></svg>
<div class="tl" style="top:604px"></div>
<div class="t" style="left:64.5px;top:621.33px;font-size:12.6px;line-height:12.6px;color:#444;font-weight:normal;font-style:normal;">CPU Credit Balance</div>
<div class="t" style="right:629.3px;top:621.33px;font-size:12.6px;line-height:12.6px;color:#444;font-weight:normal;font-style:normal;text-align:right;">16</div>
<div class="t" style="right:547px;top:621.33px;font-size:12.6px;line-height:12.6px;color:#444;font-weight:normal;font-style:normal;text-align:right;">144 #</div>
<div class="t" style="right:355px;top:621.33px;font-size:12.6px;line-height:12.6px;color:#444;font-weight:normal;font-style:normal;text-align:right;">144 #</div>
<div class="t" style="right:162px;top:621.33px;font-size:12.6px;line-height:12.6px;color:#444;font-weight:normal;font-style:normal;text-align:right;">144 #</div>
<svg class="g" style="left:800px;top:617px" width="18" height="16" viewBox="0 0 18 16"><g fill="#3a3a3a"><rect x="9.95" y="0.9" width="1.9" height="9.2" transform="rotate(0 10.9 5.5)"/><rect x="9.95" y="0.9" width="1.9" height="9.2" transform="rotate(45 10.9 5.5)"/><rect x="9.95" y="0.9" width="1.9" height="9.2" transform="rotate(90 10.9 5.5)"/><rect x="9.95" y="0.9" width="1.9" height="9.2" transform="rotate(135 10.9 5.5)"/><circle cx="10.9" cy="5.5" r="3.7"/><rect x="4.55" y="8.1" width="1.3" height="5.8" transform="rotate(0 5.2 11)"/><rect x="4.55" y="8.1" width="1.3" height="5.8" transform="rotate(45 5.2 11)"/><rect x="4.55" y="8.1" width="1.3" height="5.8" transform="rotate(90 5.2 11)"/><rect x="4.55" y="8.1" width="1.3" height="5.8" transform="rotate(135 5.2 11)"/><circle cx="5.2" cy="11" r="2.2"/></g><circle cx="10.9" cy="5.5" r="1.9" fill="#fff"/><circle cx="5.2" cy="11" r="0.9" fill="#fff"/></svg>
<div class="tl" style="top:637px"></div>
<div class="t" style="left:64.5px;top:654.33px;font-size:12.6px;line-height:12.6px;color:#444;font-weight:normal;font-style:normal;">CPU Credit Usage</div>
<div class="t" style="right:629.3px;top:654.33px;font-size:12.6px;line-height:12.6px;color:#444;font-weight:normal;font-style:normal;text-align:right;">15</div>
<div class="t" style="right:547px;top:654.33px;font-size:12.6px;line-height:12.6px;color:#444;font-weight:normal;font-style:normal;text-align:right;">0,16 #</div>
<div class="t" style="right:355px;top:654.33px;font-size:12.6px;line-height:12.6px;color:#444;font-weight:normal;font-style:normal;text-align:right;">0,15 #</div>
<div class="t" style="right:162px;top:654.33px;font-size:12.6px;line-height:12.6px;color:#444;font-weight:normal;font-style:normal;text-align:right;">0,16 #</div>
<svg class="g" style="left:800px;top:650px" width="18" height="16" viewBox="0 0 18 16"><g fill="#3a3a3a"><rect x="9.95" y="0.9" width="1.9" height="9.2" transform="rotate(0 10.9 5.5)"/><rect x="9.95" y="0.9" width="1.9" height="9.2" transform="rotate(45 10.9 5.5)"/><rect x="9.95" y="0.9" width="1.9" height="9.2" transform="rotate(90 10.9 5.5)"/><rect x="9.95" y="0.9" width="1.9" height="9.2" transform="rotate(135 10.9 5.5)"/><circle cx="10.9" cy="5.5" r="3.7"/><rect x="4.55" y="8.1" width="1.3" height="5.8" transform="rotate(0 5.2 11)"/><rect x="4.55" y="8.1" width="1.3" height="5.8" transform="rotate(45 5.2 11)"/><rect x="4.55" y="8.1" width="1.3" height="5.8" transform="rotate(90 5.2 11)"/><rect x="4.55" y="8.1" width="1.3" height="5.8" transform="rotate(135 5.2 11)"/><circle cx="5.2" cy="11" r="2.2"/></g><circle cx="10.9" cy="5.5" r="1.9" fill="#fff"/><circle cx="5.2" cy="11" r="0.9" fill="#fff"/></svg>
<div class="tl" style="top:670px"></div>
<div class="t" style="left:64.5px;top:687.33px;font-size:12.6px;line-height:12.6px;color:#444;font-weight:normal;font-style:normal;">CPU Utilization</div>
<div class="t" style="right:629.3px;top:687.33px;font-size:12.6px;line-height:12.6px;color:#444;font-weight:normal;font-style:normal;text-align:right;">0</div>
<div class="t" style="right:547px;top:687.33px;font-size:12.6px;line-height:12.6px;color:#444;font-weight:normal;font-style:normal;text-align:right;">0 %</div>
<div class="t" style="right:355px;top:687.33px;font-size:12.6px;line-height:12.6px;color:#444;font-weight:normal;font-style:normal;text-align:right;">2,62 %</div>
<div class="t" style="right:162px;top:687.33px;font-size:12.6px;line-height:12.6px;color:#444;font-weight:normal;font-style:normal;text-align:right;">4 %</div>
<svg class="g" style="left:800px;top:683px" width="18" height="16" viewBox="0 0 18 16"><g fill="#3a3a3a"><rect x="9.95" y="0.9" width="1.9" height="9.2" transform="rotate(0 10.9 5.5)"/><rect x="9.95" y="0.9" width="1.9" height="9.2" transform="rotate(45 10.9 5.5)"/><rect x="9.95" y="0.9" width="1.9" height="9.2" transform="rotate(90 10.9 5.5)"/><rect x="9.95" y="0.9" width="1.9" height="9.2" transform="rotate(135 10.9 5.5)"/><circle cx="10.9" cy="5.5" r="3.7"/><rect x="4.55" y="8.1" width="1.3" height="5.8" transform="rotate(0 5.2 11)"/><rect x="4.55" y="8.1" width="1.3" height="5.8" transform="rotate(45 5.2 11)"/><rect x="4.55" y="8.1" width="1.3" height="5.8" transform="rotate(90 5.2 11)"/><rect x="4.55" y="8.1" width="1.3" height="5.8" transform="rotate(135 5.2 11)"/><circle cx="5.2" cy="11" r="2.2"/></g><circle cx="10.9" cy="5.5" r="1.9" fill="#fff"/><circle cx="5.2" cy="11" r="0.9" fill="#fff"/></svg>
<div class="tl" style="top:703px"></div>
<div class="t" style="left:64.5px;top:720.33px;font-size:12.6px;line-height:12.6px;color:#444;font-weight:normal;font-style:normal;">Database Connections</div>
<div class="t" style="right:629.3px;top:720.33px;font-size:12.6px;line-height:12.6px;color:#444;font-weight:normal;font-style:normal;text-align:right;">1</div>
<div class="t" style="right:547px;top:720.33px;font-size:12.6px;line-height:12.6px;color:#444;font-weight:normal;font-style:normal;text-align:right;">0 #</div>
<div class="t" style="right:355px;top:720.33px;font-size:12.6px;line-height:12.6px;color:#444;font-weight:normal;font-style:normal;text-align:right;">0 #</div>
<div class="t" style="right:162px;top:720.33px;font-size:12.6px;line-height:12.6px;color:#444;font-weight:normal;font-style:normal;text-align:right;">0 #</div>
<svg class="g" style="left:800px;top:716px" width="18" height="16" viewBox="0 0 18 16"><g fill="#3a3a3a"><rect x="9.95" y="0.9" width="1.9" height="9.2" transform="rotate(0 10.9 5.5)"/><rect x="9.95" y="0.9" width="1.9" height="9.2" transform="rotate(45 10.9 5.5)"/><rect x="9.95" y="0.9" width="1.9" height="9.2" transform="rotate(90 10.9 5.5)"/><rect x="9.95" y="0.9" width="1.9" height="9.2" transform="rotate(135 10.9 5.5)"/><circle cx="10.9" cy="5.5" r="3.7"/><rect x="4.55" y="8.1" width="1.3" height="5.8" transform="rotate(0 5.2 11)"/><rect x="4.55" y="8.1" width="1.3" height="5.8" transform="rotate(45 5.2 11)"/><rect x="4.55" y="8.1" width="1.3" height="5.8" transform="rotate(90 5.2 11)"/><rect x="4.55" y="8.1" width="1.3" height="5.8" transform="rotate(135 5.2 11)"/><circle cx="5.2" cy="11" r="2.2"/></g><circle cx="10.9" cy="5.5" r="1.9" fill="#fff"/><circle cx="5.2" cy="11" r="0.9" fill="#fff"/></svg>
<div class="tl" style="top:736px"></div>
<div class="t" style="left:64.5px;top:753.33px;font-size:12.6px;line-height:12.6px;color:#444;font-weight:normal;font-style:normal;">Disk Queue Depth</div>
<div class="t" style="right:629.3px;top:753.33px;font-size:12.6px;line-height:12.6px;color:#444;font-weight:normal;font-style:normal;text-align:right;">12</div>
<div class="t" style="right:547px;top:753.33px;font-size:12.6px;line-height:12.6px;color:#444;font-weight:normal;font-style:normal;text-align:right;">&lt; 0,01 #</div>
<div class="t" style="right:355px;top:753.33px;font-size:12.6px;line-height:12.6px;color:#444;font-weight:normal;font-style:normal;text-align:right;">0 #</div>
<div class="t" style="right:162px;top:753.33px;font-size:12.6px;line-height:12.6px;color:#444;font-weight:normal;font-style:normal;text-align:right;">&lt; 0,01 #</div>
<svg class="g" style="left:800px;top:749px" width="18" height="16" viewBox="0 0 18 16"><g fill="#3a3a3a"><rect x="9.95" y="0.9" width="1.9" height="9.2" transform="rotate(0 10.9 5.5)"/><rect x="9.95" y="0.9" width="1.9" height="9.2" transform="rotate(45 10.9 5.5)"/><rect x="9.95" y="0.9" width="1.9" height="9.2" transform="rotate(90 10.9 5.5)"/><rect x="9.95" y="0.9" width="1.9" height="9.2" transform="rotate(135 10.9 5.5)"/><circle cx="10.9" cy="5.5" r="3.7"/><rect x="4.55" y="8.1" width="1.3" height="5.8" transform="rotate(0 5.2 11)"/><rect x="4.55" y="8.1" width="1.3" height="5.8" transform="rotate(45 5.2 11)"/><rect x="4.55" y="8.1" width="1.3" height="5.8" transform="rotate(90 5.2 11)"/><rect x="4.55" y="8.1" width="1.3" height="5.8" transform="rotate(135 5.2 11)"/><circle cx="5.2" cy="11" r="2.2"/></g><circle cx="10.9" cy="5.5" r="1.9" fill="#fff"/><circle cx="5.2" cy="11" r="0.9" fill="#fff"/></svg>
<div class="tl" style="top:769px"></div>
<div class="t" style="left:64.5px;top:786.33px;font-size:12.6px;line-height:12.6px;color:#444;font-weight:normal;font-style:normal;">Downtime</div>
<div class="t" style="right:629.3px;top:786.33px;font-size:12.6px;line-height:12.6px;color:#444;font-weight:normal;font-style:normal;text-align:right;">-4</div>
<div class="t" style="right:547px;top:786.33px;font-size:12.6px;line-height:12.6px;color:#444;font-weight:normal;font-style:normal;text-align:right;"></div>
<div class="t" style="right:355px;top:786.33px;font-size:12.6px;line-height:12.6px;color:#444;font-weight:normal;font-style:normal;text-align:right;"></div>
<div class="t" style="right:162px;top:786.33px;font-size:12.6px;line-height:12.6px;color:#444;font-weight:normal;font-style:normal;text-align:right;"></div>
<svg class="g" style="left:800px;top:782px" width="18" height="16" viewBox="0 0 18 16"><g fill="#3a3a3a"><rect x="9.95" y="0.9" width="1.9" height="9.2" transform="rotate(0 10.9 5.5)"/><rect x="9.95" y="0.9" width="1.9" height="9.2" transform="rotate(45 10.9 5.5)"/><rect x="9.95" y="0.9" width="1.9" height="9.2" transform="rotate(90 10.9 5.5)"/><rect x="9.95" y="0.9" width="1.9" height="9.2" transform="rotate(135 10.9 5.5)"/><circle cx="10.9" cy="5.5" r="3.7"/><rect x="4.55" y="8.1" width="1.3" height="5.8" transform="rotate(0 5.2 11)"/><rect x="4.55" y="8.1" width="1.3" height="5.8" transform="rotate(45 5.2 11)"/><rect x="4.55" y="8.1" width="1.3" height="5.8" transform="rotate(90 5.2 11)"/><rect x="4.55" y="8.1" width="1.3" height="5.8" transform="rotate(135 5.2 11)"/><circle cx="5.2" cy="11" r="2.2"/></g><circle cx="10.9" cy="5.5" r="1.9" fill="#fff"/><circle cx="5.2" cy="11" r="0.9" fill="#fff"/></svg>
<div class="tl" style="top:802px"></div>
<div class="t" style="left:64.5px;top:819.33px;font-size:12.6px;line-height:12.6px;color:#444;font-weight:normal;font-style:normal;">Free Storage Space</div>
<div class="t" style="right:629.3px;top:819.33px;font-size:12.6px;line-height:12.6px;color:#444;font-weight:normal;font-style:normal;text-align:right;">3</div>
<div class="t" style="left:288.5px;top:819.33px;font-size:12.6px;line-height:12.6px;color:#444;font-weight:normal;font-style:normal;">19.385 …</div>
<div class="t" style="right:355px;top:819.33px;font-size:12.6px;line-height:12.6px;color:#444;font-weight:normal;font-style:normal;text-align:right;">19.385 MB</div>
<div class="t" style="right:162px;top:819.33px;font-size:12.6px;line-height:12.6px;color:#444;font-weight:normal;font-style:normal;text-align:right;">19.385 MB</div>
<svg class="g" style="left:800px;top:815px" width="18" height="16" viewBox="0 0 18 16"><g fill="#3a3a3a"><rect x="9.95" y="0.9" width="1.9" height="9.2" transform="rotate(0 10.9 5.5)"/><rect x="9.95" y="0.9" width="1.9" height="9.2" transform="rotate(45 10.9 5.5)"/><rect x="9.95" y="0.9" width="1.9" height="9.2" transform="rotate(90 10.9 5.5)"/><rect x="9.95" y="0.9" width="1.9" height="9.2" transform="rotate(135 10.9 5.5)"/><circle cx="10.9" cy="5.5" r="3.7"/><rect x="4.55" y="8.1" width="1.3" height="5.8" transform="rotate(0 5.2 11)"/><rect x="4.55" y="8.1" width="1.3" height="5.8" transform="rotate(45 5.2 11)"/><rect x="4.55" y="8.1" width="1.3" height="5.8" transform="rotate(90 5.2 11)"/><rect x="4.55" y="8.1" width="1.3" height="5.8" transform="rotate(135 5.2 11)"/><circle cx="5.2" cy="11" r="2.2"/></g><circle cx="10.9" cy="5.5" r="1.9" fill="#fff"/><circle cx="5.2" cy="11" r="0.9" fill="#fff"/></svg>
<div class="tl" style="top:835px"></div>
<div class="t" style="left:64.5px;top:852.33px;font-size:12.6px;line-height:12.6px;color:#444;font-weight:normal;font-style:normal;">Freeable Memory</div>
<div class="t" style="right:629.3px;top:852.33px;font-size:12.6px;line-height:12.6px;color:#444;font-weight:normal;font-style:normal;text-align:right;">2</div>
<div class="t" style="right:547px;top:852.33px;font-size:12.6px;line-height:12.6px;color:#444;font-weight:normal;font-style:normal;text-align:right;">370 MB</div>
<div class="t" style="right:355px;top:852.33px;font-size:12.6px;line-height:12.6px;color:#444;font-weight:normal;font-style:normal;text-align:right;">369 MB</div>
<div class="t" style="right:162px;top:852.33px;font-size:12.6px;line-height:12.6px;color:#444;font-weight:normal;font-style:normal;text-align:right;">370 MB</div>
<svg class="g" style="left:800px;top:848px" width="18" height="16" viewBox="0 0 18 16"><g fill="#3a3a3a"><rect x="9.95" y="0.9" width="1.9" height="9.2" transform="rotate(0 10.9 5.5)"/><rect x="9.95" y="0.9" width="1.9" height="9.2" transform="rotate(45 10.9 5.5)"/><rect x="9.95" y="0.9" width="1.9" height="9.2" transform="rotate(90 10.9 5.5)"/><rect x="9.95" y="0.9" width="1.9" height="9.2" transform="rotate(135 10.9 5.5)"/><circle cx="10.9" cy="5.5" r="3.7"/><rect x="4.55" y="8.1" width="1.3" height="5.8" transform="rotate(0 5.2 11)"/><rect x="4.55" y="8.1" width="1.3" height="5.8" transform="rotate(45 5.2 11)"/><rect x="4.55" y="8.1" width="1.3" height="5.8" transform="rotate(90 5.2 11)"/><rect x="4.55" y="8.1" width="1.3" height="5.8" transform="rotate(135 5.2 11)"/><circle cx="5.2" cy="11" r="2.2"/></g><circle cx="10.9" cy="5.5" r="1.9" fill="#fff"/><circle cx="5.2" cy="11" r="0.9" fill="#fff"/></svg>
<div class="tl" style="top:868px"></div>
<div class="t" style="left:64.5px;top:885.33px;font-size:12.6px;line-height:12.6px;color:#444;font-weight:normal;font-style:normal;">Network Receive Throu…</div>
<div class="t" style="right:629.3px;top:885.33px;font-size:12.6px;line-height:12.6px;color:#444;font-weight:normal;font-style:normal;text-align:right;">13</div>
<div class="t" style="left:288.5px;top:885.33px;font-size:12.6px;line-height:12.6px;color:#444;font-weight:normal;font-style:normal;">414 Byte…</div>
<div class="t" style="right:355px;top:885.33px;font-size:12.6px;line-height:12.6px;color:#444;font-weight:normal;font-style:normal;text-align:right;">404 Byte/s</div>
<div class="t" style="right:162px;top:885.33px;font-size:12.6px;line-height:12.6px;color:#444;font-weight:normal;font-style:normal;text-align:right;">658 Byte/s</div>
<svg class="g" style="left:800px;top:881px" width="18" height="16" viewBox="0 0 18 16"><g fill="#3a3a3a"><rect x="9.95" y="0.9" width="1.9" height="9.2" transform="rotate(0 10.9 5.5)"/><rect x="9.95" y="0.9" width="1.9" height="9.2" transform="rotate(45 10.9 5.5)"/><rect x="9.95" y="0.9" width="1.9" height="9.2" transform="rotate(90 10.9 5.5)"/><rect x="9.95" y="0.9" width="1.9" height="9.2" transform="rotate(135 10.9 5.5)"/><circle cx="10.9" cy="5.5" r="3.7"/><rect x="4.55" y="8.1" width="1.3" height="5.8" transform="rotate(0 5.2 11)"/><rect x="4.55" y="8.1" width="1.3" height="5.8" transform="rotate(45 5.2 11)"/><rect x="4.55" y="8.1" width="1.3" height="5.8" transform="rotate(90 5.2 11)"/><rect x="4.55" y="8.1" width="1.3" height="5.8" transform="rotate(135 5.2 11)"/><circle cx="5.2" cy="11" r="2.2"/></g><circle cx="10.9" cy="5.5" r="1.9" fill="#fff"/><circle cx="5.2" cy="11" r="0.9" fill="#fff"/></svg>
<div class="frame"></div>
</body></html>
